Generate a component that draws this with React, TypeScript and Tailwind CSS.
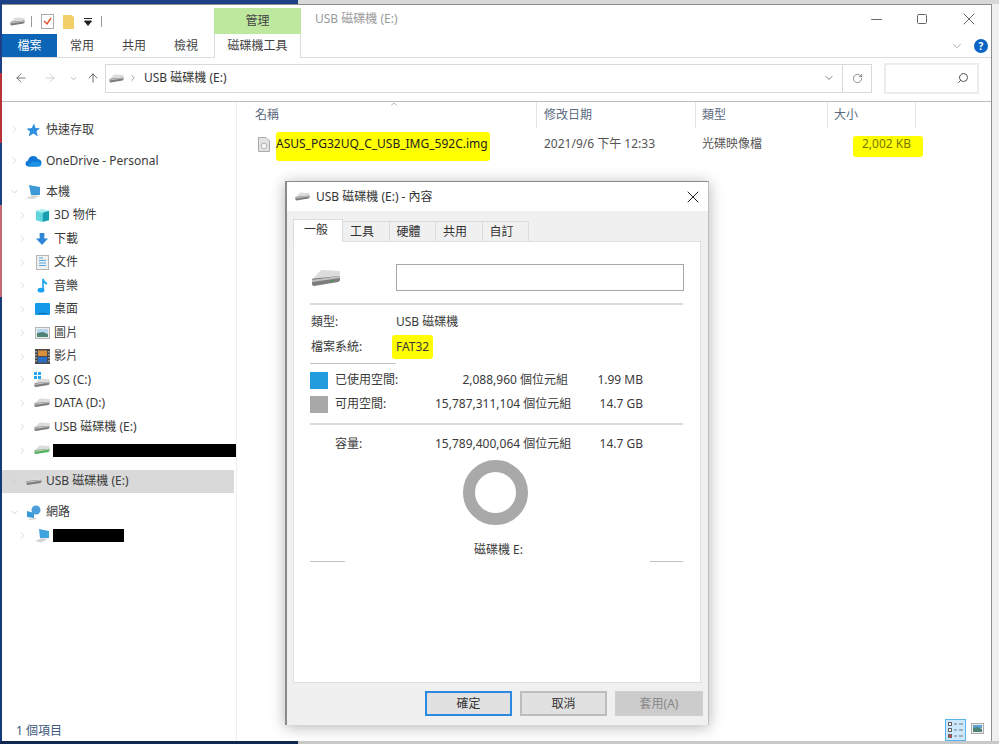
import { ChevronRight, ChevronDown, ArrowLeft, ArrowRight, ArrowUp, RotateCw, Search, X, Minus, Square } from "lucide-react"

const FONT = "font-['Noto_Sans','Noto_Sans_CJK_TC',sans-serif]"

function Drive({ w = 18, led = "#666", base = "#7d7d7d" }: { w?: number; led?: string; base?: string }) {
  return (
    <svg width={w} height={w * 0.6} viewBox="0 0 30 18" className="shrink-0">
      <path d="M1 11 L9 2 Q10 1 12 1 L29 2 L29 9 L3 16 Q1 16 1 14 Z" fill="#dcdcdc" />
      <path d="M1 11 Q1 9 3 9.5 L29 7 L29 11 Q29 12 27 13 L3 17 Q1 17 1 15 Z" fill={base} />
      <path d="M1 11 L29 7 L29 9 L1 13 Z" fill="#c4c4c4" />
      <rect x="20" y="11" width="2" height="1.6" fill={led} />
    </svg>
  )
}

function TreeIcon({ name }: { name: string }) {
  const box = "shrink-0"
  switch (name) {
    case "star":
      return (
        <svg width="14" height="14" viewBox="0 0 14 14" className={`${box} -ml-[2px]`}>
          <path d="M8 0.5 L9.5 5 L14 5.2 L10.5 8.2 L11.8 13.5 L7.4 10.6 L2.6 13.5 L4 8.6 L0.5 5.8 L5.8 5 Z" fill="#2f8fe0" />
        </svg>
      )
    case "cloud":
      return (
        <svg width="17" height="12" viewBox="0 0 17 12" className={`${box} -ml-[1px]`}>
          <path d="M4 11.5 Q0.5 11.5 0.5 8.5 Q0.5 6 3 5.6 Q4 1 8.5 1 Q11.5 1 12.8 4 Q16.5 4.5 16.5 8 Q16.5 11.5 13 11.5 Z" fill="#0f78d4" />
          <path d="M3 11.5 Q6 6 10 7 Q14 6 16 9 Q16 11.5 13 11.5 Z" fill="#1b91e6" />
        </svg>
      )
    case "pc":
      return (
        <svg width="17" height="16" viewBox="0 0 17 16" className={`${box} -ml-[1px]`}>
          <path d="M4 1 L15 3 L15 11 L6 11 Z" fill="#3f9bd8" />
          <path d="M1 14 L8 11 L15 12 L8 15 Z" fill="#d8d8d8" />
        </svg>
      )
    case "cube":
      return (
        <svg width="15" height="15" viewBox="0 0 16 16" className={box}>
          <path d="M1 3 L8 1 L15 3 L8 5 Z" fill="#a5eef0" />
          <path d="M1 3 L8 5 L8 15 L1 13 Z" fill="#5fd6de" />
          <path d="M15 3 L8 5 L8 15 L15 13 Z" fill="#169fb0" />
        </svg>
      )
    case "down":
      return (
        <svg width="14" height="14" viewBox="0 0 15 15" className={box}>
          <path d="M5 1 H10 V7 H14 L7.5 14 L1 7 H5 Z" fill="#2f86d6" />
        </svg>
      )
    case "doc":
      return (
        <svg width="13" height="15" viewBox="0 0 13 15" className={box}>
          <rect x="0.5" y="0.5" width="12" height="14" fill="#f0f0f0" stroke="#b5b5b5" />
          <path d="M3 3 H7 M3 5.5 H10 M3 8 H10 M3 10.5 H10" stroke="#5aa9e0" strokeWidth="1" />
        </svg>
      )
    case "note":
      return (
        <svg width="11" height="15" viewBox="0 0 11 15" className={box}>
          <ellipse cx="4" cy="12.2" rx="3.4" ry="2.4" fill="#1aa3ee" />
          <path d="M6 12 V1 Q6.5 4 10 6" stroke="#1aa3ee" strokeWidth="1.6" fill="none" />
        </svg>
      )
    case "desktop":
      return (
        <svg width="15" height="12" viewBox="0 0 15 12" className={box}>
          <rect width="15" height="12" rx="1" fill="#1599e8" />
          <rect x="3" y="10" width="9" height="1" fill="#0b6fb0" />
        </svg>
      )
    case "pics":
      return (
        <svg width="15" height="12" viewBox="0 0 15 12" className={box}>
          <rect x="0.5" y="0.5" width="14" height="11" fill="#eee" stroke="#b5b5b5" />
          <rect x="2" y="2" width="11" height="4" fill="#b8d6ec" />
          <path d="M2 6 L8 5 L13 7 V10 H2 Z" fill="#4f8378" />
        </svg>
      )
    case "film":
      return (
        <svg width="15" height="15" viewBox="0 0 15 15" className={box}>
          <rect width="15" height="15" fill="#4b4b4b" />
          <rect x="3" y="1.5" width="9" height="5.5" fill="#d8903a" />
          <rect x="3" y="8" width="9" height="5.5" fill="#2a6fc4" />
          <path d="M1 2 V13 M14 2 V13" stroke="#ddd" strokeWidth="1" strokeDasharray="1.5 1.5" />
        </svg>
      )
    case "os":
      return (
        <div className="relative flex h-[15px] w-[16px] shrink-0 items-end">
          <Drive w={16} />
          <svg width="7" height="7" viewBox="0 0 7 7" className="absolute left-0 top-0">
            <path d="M0 0 H3 V3 H0 Z M4 0 H7 V3 H4 Z M0 4 H3 V7 H0 Z M4 4 H7 V7 H4 Z" fill="#22a7ee" />
          </svg>
        </div>
      )
    case "green":
      return <Drive w={16} led="#3fb24a" base="#4fb05a" />
    case "net":
      return (
        <svg width="16" height="15" viewBox="0 0 16 15" className={`${box} -ml-[1px]`}>
          <circle cx="10" cy="5" r="4.5" fill="#4c9fd8" />
          <path d="M1 6 L8 8 L8 13 L1 12 Z" fill="#3a9ad6" />
          <path d="M2 14 L9 13 L11 14 L4 15 Z" fill="#cfcfcf" />
        </svg>
      )
    case "netpc":
      return (
        <svg width="16" height="15" viewBox="0 0 16 15" className={box}>
          <path d="M5 1 L15 3 L15 10 L6 10 Z" fill="#3fa3dc" />
          <path d="M1 13 L8 10 L14 11 L7 14.5 Z" fill="#d4d4d4" />
        </svg>
      )
    default:
      return <Drive w={16} />
  }
}

function TreeRow({
  icon,
  label,
  indent = false,
  open = false,
  selected = false,
  redact,
}: {
  icon: string
  label?: string
  indent?: boolean
  open?: boolean
  selected?: boolean
  redact?: number
}) {
  return (
    <div className={`flex h-[23.5px] items-center ${indent ? "pl-[15px]" : "pl-[7px]"} ${selected ? "mr-[2px] bg-[#d9d9d9]" : ""}`}>
      {open ? (
        <ChevronDown size={11} strokeWidth={1.5} className="shrink-0 text-[#bdbdbd]" />
      ) : (
        <ChevronRight size={11} strokeWidth={1.5} className="shrink-0 text-[#c9c9c9]" />
      )}
      <div className="flex w-[26px] shrink-0 justify-center pl-[2px]">
        <TreeIcon name={icon} />
      </div>
      {label && <span className="text-[12px] text-[#3a3a3a]">{label}</span>}
      {redact && <div className="ml-[-1px] h-[13px] bg-black" style={{ width: redact }} />}
    </div>
  )
}

function Tab({ label, active = false }: { label: string; active?: boolean }) {
  return active ? (
    <div className="z-10 flex h-[23px] w-[50px] items-start border-x border-t border-[#dcdcdc] bg-white pl-[10px] pt-[1px] text-[12px] text-[#333]">
      {label}
    </div>
  ) : (
    <div className="mt-[2px] flex h-[21px] w-[46.5px] items-center border-r border-t border-[#dcdcdc] bg-[#f0f0f0] pl-[7px] text-[12px] text-[#333]">
      {label}
    </div>
  )
}

function SpaceRow({ color, label, bytes, size }: { color?: string; label: string; bytes: string; size: string }) {
  return (
    <div className="flex h-[18px] items-center text-[12px] text-[#3a3a3a]">
      <div className="h-[17px] w-[18px] shrink-0" style={{ backgroundColor: color }} />
      <span className="ml-[7px] w-[100px]">{label}</span>
      <span className="w-[133px] whitespace-nowrap text-right">{bytes}</span>
      <span className="w-[75px] whitespace-nowrap text-right">{size}</span>
    </div>
  )
}

function PropertiesDialog() {
  return (
    <div className="absolute left-[285px] top-[181px] flex h-[544px] w-[424px] flex-col border-l-2 border-t border-r border-[#8a8a8a] border-r-[#bdbdbd] bg-[#f0f0f0] shadow-[0_2px_14px_rgba(0,0,0,0.3)]">
      <div className="flex h-[29px] shrink-0 items-center bg-white pl-[8px] pr-[5px] text-[12px] text-[#333]">
        <Drive w={15} />
        <span className="ml-[6px]">USB 磁碟機 (E:) - 內容</span>
        <X size={20} strokeWidth={1.2} className="ml-auto text-[#222]" />
      </div>
      <div className="ml-[6px] mt-[8px] flex h-[23px] shrink-0">
        <Tab label="一般" active />
        <Tab label="工具" />
        <Tab label="硬體" />
        <Tab label="共用" />
        <Tab label="自訂" />
      </div>
      <div className="mx-[6px] mt-[-1px] flex h-[442px] w-[408px] shrink-0 flex-col border border-[#dfdfdf] bg-white pl-[16px] pr-[16px]">
        <div className="mt-[22px] flex h-[27px] items-center">
          <div className="ml-[1px] w-[85px]">
            <Drive w={30} led="#3c9a50" />
          </div>
          <div className="h-[27px] w-[289px] border border-[#a8a8a8] bg-white" />
        </div>
        <div className="mt-[12px] h-[2px] w-[373px] bg-[#dcdcdc]" />
        <div className="mt-[8px] flex h-[18px] items-center text-[12px] text-[#3a3a3a]">
          <span className="w-[86px] pl-[1px]">類型:</span>
          <span>USB 磁碟機</span>
        </div>
        <div className="mt-[7px] flex h-[18px] items-center text-[12px] text-[#3a3a3a]">
          <span className="w-[82px] pl-[1px]">檔案系統:</span>
          <span className="rounded-[3px] bg-[#ffff00] px-[4px] py-[3px] leading-[18px]">FAT32</span>
        </div>
        <div className="mt-[7px] h-px w-[86px] bg-[#c4c4c4]" />
        <div className="mt-[7px] flex flex-col gap-[6px]">
          <SpaceRow color="#229cdd" label="已使用空間:" bytes="2,088,960 個位元組" size="1.99 MB" />
          <SpaceRow color="#a8a8a8" label="可用空間:" bytes="15,787,311,104 個位元組" size="14.7 GB" />
        </div>
        <div className="mt-[10px] h-[2px] w-[373px] bg-[#dcdcdc]" />
        <div className="mt-[10px]">
          <SpaceRow label="容量:" bytes="15,789,400,064 個位元組" size="14.7 GB" />
        </div>
        <div className="ml-[153px] mt-[7px] h-[65px] w-[65px] rounded-full border-[12.5px] border-[#a9a9a9]" />
        <div className="mt-[17px] flex items-end text-[12px] text-[#3a3a3a]">
          <div className="h-px w-[35px] translate-y-[4px] bg-[#c4c4c4]" />
          <span className="ml-[129px] h-[16px] leading-[16px]">磁碟機 E:</span>
          <div className="ml-auto mr-[1px] h-px w-[33px] translate-y-[4px] bg-[#c4c4c4]" />
        </div>
      </div>
      <div className="mt-[8px] flex justify-end gap-[8px] pr-[5px] text-[12px]">
        <button className="h-[25px] w-[87px] border-2 border-[#2b8ae0] bg-[#e1e1e1] text-[#333]">確定</button>
        <button className="h-[25px] w-[87px] border-2 border-[#bdbdbd] bg-[#e1e1e1] text-[#333]">取消</button>
        <button className="h-[25px] w-[88px] border border-[#cfcfcf] bg-[#cccccc] text-[#888]">套用(A)</button>
      </div>
    </div>
  )
}

export default function App() {
  return (
    <div className={`relative flex h-[744px] w-[999px] flex-col overflow-hidden bg-[#ececec] ${FONT}`}>
      <div className="flex h-[4px] shrink-0">
        <div className="w-[298px] bg-[#1c3f86]" />
        <div className="flex-1 bg-[#d8d8d8]" />
      </div>

      <div className="flex min-h-0 flex-1">
        <div className="flex w-[2px] shrink-0 flex-col">
          <div className="h-[69px] bg-[#1c3f86]" />
          <div className="h-[70px] bg-[#b8323a]" />
          <div className="h-[62px] bg-[#1c3f86]" />
          <div className="h-[92px] bg-[#c26a70]" />
          <div className="flex-1 bg-[#163a78]" />
        </div>

        <div className="flex w-[990px] shrink-0 flex-col border-r border-t border-[#8f8f8f] bg-white">
          {/* title bar */}
          <div className="flex h-[29px] shrink-0 items-end">
            <div className="flex h-[25px] w-[212px] items-center pl-[8px]">
              <Drive w={15} />
              <div className="ml-[6px] h-[11px] w-px bg-[#999]" />
              <svg width="13" height="15" viewBox="0 0 13 15" className="ml-[9px]">
                <rect x="0.5" y="0.5" width="12" height="14" fill="#fff" stroke="#aaa" />
                <path d="M3 7 L6 10 L10 4" stroke="#e0502a" strokeWidth="1.4" fill="none" />
              </svg>
              <svg width="11" height="15" viewBox="0 0 11 15" className="ml-[9px]">
                <path d="M0 1 H8 L11 3 V15 H0 Z" fill="#f3cf6a" />
              </svg>
              <svg width="8" height="8" viewBox="0 0 8 8" className="ml-[10px]">
                <path d="M0 0.5 H8 M0.5 3 H7.5 L4 7.5 Z" stroke="#222" strokeWidth="1" fill="#222" />
              </svg>
              <div className="ml-[9px] h-[11px] w-px bg-[#999]" />
            </div>
            <div className="flex h-[26px] w-[87px] items-center justify-center bg-[#bfe89f] text-[12px] text-[#444]">管理</div>
            <span className="mb-[6px] ml-[14px] text-[12px] text-[#9a9a9a]">USB 磁碟機 (E:)</span>
            <div className="ml-auto flex h-[25px] items-center pb-[5px] pr-[12px] text-[#666]">
              <Minus size={17} strokeWidth={1.4} />
              <Square size={12} strokeWidth={2} className="ml-[31px]" />
              <X size={20} strokeWidth={1.2} className="ml-[31px]" />
            </div>
          </div>

          {/* ribbon tabs */}
          <div className="flex h-[24px] shrink-0 items-stretch border-b border-[#dcdcdc] text-[12px] text-[#444]">
            <div className="flex w-[55px] items-center justify-center bg-[#0b64b5] text-white">檔案</div>
            <div className="flex w-[50px] items-center justify-center">常用</div>
            <div className="flex w-[54px] items-center justify-center">共用</div>
            <div className="flex w-[50px] items-center justify-center">檢視</div>
            <div className="mb-[-1px] ml-[3px] flex w-[87px] items-center justify-center border-x border-[#dcdcdc] bg-white">磁碟機工具</div>
            <div className="ml-auto flex items-center gap-[10px] pr-[3px]">
              <ChevronDown size={14} strokeWidth={1} className="text-[#777]" />
              <div className="flex h-[14px] w-[14px] items-center justify-center rounded-full bg-[#0b64c4] text-[10px] font-bold leading-none text-white">?</div>
            </div>
          </div>

          {/* address bar */}
          <div className="flex h-[44px] shrink-0 items-center border-b border-[#bdbdbd] pb-[3px]">
            <ArrowLeft size={14} strokeWidth={1.5} className="ml-[12px] text-[#666]" />
            <ArrowRight size={14} strokeWidth={1.5} className="ml-[15px] text-[#c9c9c9]" />
            <ChevronDown size={9} strokeWidth={1.5} className="ml-[12px] text-[#888]" />
            <ArrowUp size={14} strokeWidth={1.5} className="ml-[8px] text-[#555]" />
            <div className="ml-[5px] flex h-[29px] w-[737px] items-center border border-r-0 border-[#d9d9d9] pl-[3px]">
              <Drive w={15} />
              <ChevronRight size={10} strokeWidth={1.5} className="ml-[4px] text-[#666]" />
              <span className="ml-[6px] text-[12px] text-[#333]">USB 磁碟機 (E:)</span>
              <ChevronDown size={12} strokeWidth={1.5} className="ml-auto mr-[7px] text-[#555]" />
            </div>
            <div className="flex h-[29px] w-[30px] items-center justify-center border border-[#d9d9d9]">
              <RotateCw size={11} strokeWidth={1.4} className="text-[#555]" />
            </div>
            <div className="ml-[12px] flex h-[31px] w-[95px] items-center justify-end border-2 border-[#ececec] pr-[8px]">
              <Search size={12} strokeWidth={2} className="-scale-x-100 text-[#555]" />
            </div>
          </div>

          {/* panes */}
          <div className="flex min-h-0 flex-1">
            <div className="flex w-[235px] shrink-0 flex-col gap-[7.5px] border-r border-[#efefef] pt-[16px]">
              <TreeRow icon="star" label="快速存取" />
              <TreeRow icon="cloud" label="OneDrive - Personal" />
              <div className="flex flex-col">
                <TreeRow icon="pc" label="本機" open />
                <TreeRow icon="cube" label="3D 物件" indent />
                <TreeRow icon="down" label="下載" indent />
                <TreeRow icon="doc" label="文件" indent />
                <TreeRow icon="note" label="音樂" indent />
                <TreeRow icon="desktop" label="桌面" indent />
                <TreeRow icon="pics" label="圖片" indent />
                <TreeRow icon="film" label="影片" indent />
                <TreeRow icon="os" label="OS (C:)" indent />
                <TreeRow icon="drive" label="DATA (D:)" indent />
                <TreeRow icon="drive" label="USB 磁碟機 (E:)" indent />
                <TreeRow icon="green" indent redact={184} />
              </div>
              <TreeRow icon="drive" label="USB 磁碟機 (E:)" selected />
              <div className="flex flex-col">
                <TreeRow icon="net" label="網路" open />
                <TreeRow icon="netpc" indent redact={71} />
              </div>
            </div>

            <div className="flex min-w-0 flex-1 flex-col text-[12px]">
              <div className="relative flex h-[26px] shrink-0 items-center text-[#5a6a7e]">
                <div className="flex h-full w-[300px] items-center border-r border-[#e5e5e5] pl-[18px]">名稱</div>
                <ChevronDown size={10} strokeWidth={1.2} className="absolute left-[152px] top-[-3px] rotate-180 text-[#666]" />
                <div className="flex h-full w-[159px] items-center border-r border-[#e5e5e5] pl-[7px]">修改日期</div>
                <div className="flex h-full w-[132px] items-center border-r border-[#e5e5e5] pl-[6px]">類型</div>
                <div className="flex h-full w-[88px] items-center border-r border-[#e5e5e5] pl-[6px]">大小</div>
              </div>
              <div className="mt-[4px] flex h-[29px] shrink-0 items-start leading-[19px] text-[#555]">
                <div className="flex w-[300px] items-start pl-[21px]">
                  <svg width="12" height="15" viewBox="0 0 12 15" className="mt-[5px] shrink-0">
                    <path d="M0.5 0.5 H8 L11.5 4 V14.5 H0.5 Z" fill="#e4e4e4" stroke="#aaa" />
                    <circle cx="6" cy="9" r="3" fill="#f4f4f4" stroke="#b0b0b0" />
                  </svg>
                  <span className="ml-[6px] whitespace-nowrap rounded-[3px] bg-[#ffff00] pb-[8px] pr-[2px] pt-[2px] text-[#222]">
                    ASUS_PG32UQ_C_USB_IMG_592C.img
                  </span>
                </div>
                <div className="w-[159px] whitespace-nowrap pl-[7px] pt-[2px]">2021/9/6 下午 12:33</div>
                <div className="w-[157px] whitespace-nowrap pl-[6px] pt-[2px]">光碟映像檔</div>
                <div className="mt-[4px] h-[21px] w-[70px] whitespace-nowrap rounded-[3px] bg-[#ffff00] pl-[9px] pt-[1px] leading-[14px] text-[#777700]">2,002 KB</div>
              </div>
              <div className="mr-[7px] mt-auto flex h-[22px] shrink-0 items-end justify-end">
                <svg width="21" height="22" viewBox="0 0 21 22">
                  <rect x="0.5" y="0.5" width="20" height="21" fill="#cce8ff" stroke="#59b3e8" />
                  <rect x="3.5" y="3.5" width="3" height="3" fill="#fff" stroke="#666" />
                  <rect x="3.5" y="9.5" width="3" height="3" fill="#fff" stroke="#666" />
                  <rect x="3.5" y="15.5" width="3" height="3" fill="#e04040" stroke="#666" />
                  <path d="M9 5 H12 M14 5 H18 M9 11 H12 M14 11 H18 M9 17 H12 M14 17 H18" stroke="#777" strokeWidth="1" />
                </svg>
                <svg width="13" height="11" viewBox="0 0 13 11" className="mb-[7px] ml-[5px]">
                  <rect x="0.5" y="0.5" width="12" height="10" fill="#eee" stroke="#aaa" />
                  <rect x="2" y="2" width="9" height="3" fill="#5da0d8" />
                  <path d="M2 5 L7 4 L11 6 V9 H2 Z" fill="#4f8378" />
                </svg>
              </div>
            </div>
          </div>
        </div>

        <div className="w-[7px] shrink-0 bg-[#f0f0f0]" />
      </div>

      <div className="flex h-[3px] shrink-0">
        <div className="w-[298px] bg-[#12294f]" />
        <div className="flex-1 bg-[#c9c9c9]" />
      </div>

      <span className="absolute left-[16px] top-[722px] text-[12px] text-[#40597c]">1 個項目</span>
      <PropertiesDialog />
    </div>
  )
}
